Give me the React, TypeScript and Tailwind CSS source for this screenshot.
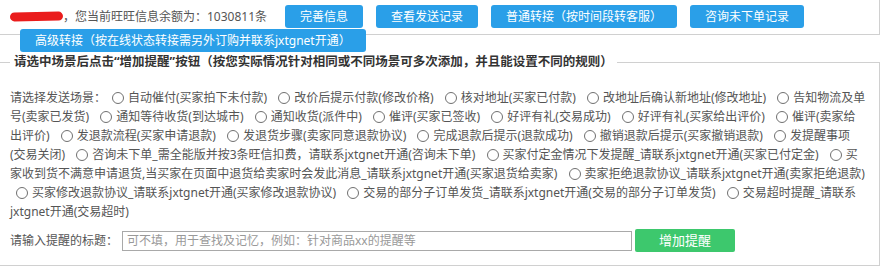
import React from 'react';

// 发送场景，按截图中的换行拆成 7 行，○ 表示单选框
const SCENE_LINES = [
  '请选择发送场景：○自动催付(买家拍下未付款) ○改价后提示付款(修改价格) ○核对地址(买家已付款) ○改地址后确认新地址(修改地址) ○告知物流及单',
  '号(卖家已发货) ○通知等待收货(到达城市) ○通知收货(派件中) ○催评(买家已签收) ○好评有礼(交易成功) ○好评有礼(买家给出评价) ○催评(卖家给',
  '出评价) ○发退款流程(买家申请退款) ○发退货步骤(卖家同意退款协议) ○完成退款后提示(退款成功) ○撤销退款后提示(买家撤销退款) ○发提醒事项',
  '(交易关闭) ○咨询未下单_需全能版并按3条旺信扣费，请联系jxtgnet开通(咨询未下单) ○买家付定金情况下发提醒_请联系jxtgnet开通(买家已付定金) ○买',
  '家收到货不满意申请退货,当买家在页面中退货给卖家时会发此消息_请联系jxtgnet开通(买家退货给卖家) ○卖家拒绝退款协议_请联系jxtgnet开通(卖家拒绝退款)',
  '○买家修改退款协议_请联系jxtgnet开通(买家修改退款协议) ○交易的部分子订单发货_请联系jxtgnet开通(交易的部分子订单发货) ○交易超时提醒_请联系',
  'jxtgnet开通(交易超时)',
];

const TOP_BUTTONS = [
  '完善信息',
  '查看发送记录',
  '普通转接（按时间段转客服）',
  '咨询未下单记录',
  '高级转接（按在线状态转接需另外订购并联系jxtgnet开通）',
];

const Radio = () => (
  <span className="inline-block w-[12px] h-[12px] rounded-full border border-[#707070] bg-white align-[-2px] ml-[6px] mr-[4px]" />
);

export default function App() {
  return (
    <div className="w-[880px] h-[268px] bg-white text-[12px] text-[#555] font-['Noto_Sans','Noto_Sans_CJK_SC',sans-serif]">
      {/* 顶部信息栏 */}
      <div className="h-[35px] border-b border-r border-[#d0d0d0] pl-[10px] pt-[5px] flex flex-wrap items-center gap-y-[1px]">
        <div className="h-[23px] leading-[23px] mr-[8px] flex items-center">
          <span className="inline-block w-[53px] h-[9px] rounded-full bg-[#ea1c1c] -rotate-1" />
          <span>，您当前旺旺信息余额为：1030811条</span>
        </div>
        {TOP_BUTTONS.map((b) => (
          <button
            key={b}
            className="h-[23px] px-[15px] ml-[10px] mr-[3px] rounded-[3px] bg-[#2a9fe8] text-white text-[12px] leading-[23px] whitespace-nowrap"
          >
            {b}
          </button>
        ))}
      </div>

      {/* 场景选择 */}
      <fieldset className="mt-[17px] h-[214px] border border-l-0 border-[#d0d0d0] pl-[10px] pr-[8px]">
        <legend className="px-[4px] text-[12.5px] leading-[20px] font-bold text-[#333]">
          请选中场景后点击“增加提醒”按钮（按您实际情况针对相同或不同场景可多次添加，并且能设置不同的规则）
        </legend>

        <div className="mt-[16px] leading-[19px] [word-spacing:2px]">
          {SCENE_LINES.map((line, i) => (
            <div key={i} className="whitespace-nowrap">
              {line.split('○').map((part, j) => (
                <React.Fragment key={j}>
                  {j > 0 && <Radio />}
                  {part}
                </React.Fragment>
              ))}
            </div>
          ))}
        </div>

        <div className="mt-[8px] flex items-center">
          <span className="w-[112px]">请输入提醒的标题：</span>
          <input
            className="w-[510px] h-[20px] border border-[#a9a9a9] px-[4px] text-[12px] outline-none placeholder:text-[#999]"
            placeholder="可不填，用于查找及记忆，例如：针对商品xx的提醒等"
          />
          <button className="ml-[3px] w-[100px] h-[23px] rounded-[2px] bg-[#3dc86d] text-white text-[13px]">
            增加提醒
          </button>
        </div>
      </fieldset>
    </div>
  );
}
